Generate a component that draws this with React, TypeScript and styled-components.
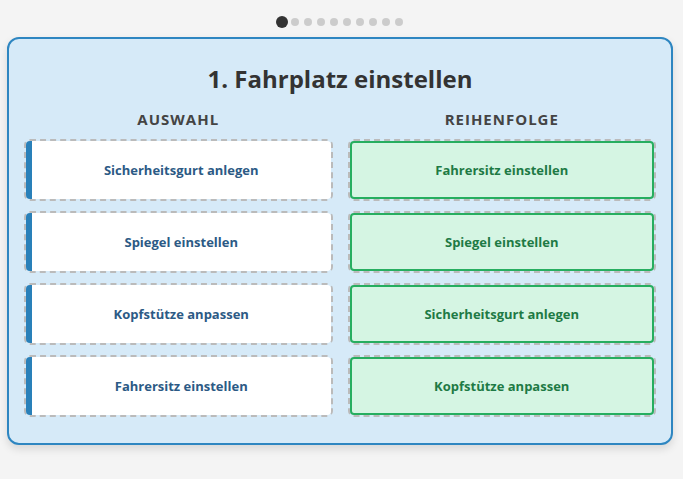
import React from 'react';
import { styled, createGlobalStyle } from 'styled-components';

const GlobalStyle = createGlobalStyle`
  html, body {
    margin: 0;
    padding: 0;
    background: #f4f4f4;
    font-family: "Open Sans", "Noto Sans", sans-serif;
  }
`;

const Page = styled.div`
  padding: 0 10px 24px 7px;
`;

const Dots = styled.div`
  display: flex;
  justify-content: center;
  align-items: center;
  gap: 5px;
  height: 37px;
  padding-top: 6px;
  box-sizing: border-box;
`;

const Dot = styled.span<{ $active?: boolean }>`
  width: 8px;
  height: 8px;
  border-radius: 50%;
  background: ${(p) => (p.$active ? '#333' : '#ccc')};
  transform: ${(p) => (p.$active ? 'scale(1.5)' : 'none')};
`;

const Panel = styled.section`
  background: #d6eaf8;
  border: 2px solid #2e86c1;
  border-radius: 12px;
  padding: 24px 15px 26px;
  box-shadow: 0 4px 8px rgba(0, 0, 0, 0.12);
`;

const Title = styled.h2`
  margin: 0 0 14px;
  text-align: center;
  font-size: 24px;
  line-height: 32px;
  font-weight: 700;
  color: #333;
`;

const Columns = styled.div`
  display: grid;
  grid-template-columns: 1fr 1fr;
  gap: 15px;
`;

const Column = styled.div`
  display: flex;
  flex-direction: column;
  gap: 10px;
`;

const ColumnHeader = styled.h3`
  margin: 0;
  text-align: center;
  font-size: 15px;
  line-height: 20px;
  font-weight: 700;
  letter-spacing: 1px;
  color: #444;
`;

const Slot = styled.div`
  border: 2px dashed #bbb;
  border-radius: 6px;
  height: 62px;
  box-sizing: border-box;
  display: flex;
`;

const Card = styled.div<{ $placed?: boolean }>`
  flex: 1;
  display: flex;
  align-items: center;
  justify-content: center;
  border-radius: 4px;
  font-size: 13px;
  font-weight: 700;
  background: ${(p) => (p.$placed ? '#d5f5e3' : '#fff')};
  color: ${(p) => (p.$placed ? '#1e7a45' : '#2c5a85')};
  border: ${(p) => (p.$placed ? '2px solid #27ae60' : 'none')};
  border-left: ${(p) => (p.$placed ? '2px solid #27ae60' : '6px solid #2980b9')};
`;

const choices = [
  'Sicherheitsgurt anlegen',
  'Spiegel einstellen',
  'Kopfstütze anpassen',
  'Fahrersitz einstellen',
];

const order = [
  'Fahrersitz einstellen',
  'Spiegel einstellen',
  'Sicherheitsgurt anlegen',
  'Kopfstütze anpassen',
];

export default function App() {
  return (
    <>
      <GlobalStyle />
      <Page>
        <Dots>
          {Array.from({ length: 10 }, (_, i) => (
            <Dot key={i} $active={i === 0} />
          ))}
        </Dots>
        <Panel>
          <Title>1. Fahrplatz einstellen</Title>
          <Columns>
            <Column>
              <ColumnHeader>AUSWAHL</ColumnHeader>
              {choices.map((c) => (
                <Slot key={c}>
                  <Card>{c}</Card>
                </Slot>
              ))}
            </Column>
            <Column>
              <ColumnHeader>REIHENFOLGE</ColumnHeader>
              {order.map((c) => (
                <Slot key={c}>
                  <Card $placed>{c}</Card>
                </Slot>
              ))}
            </Column>
          </Columns>
        </Panel>
      </Page>
    </>
  );
}
